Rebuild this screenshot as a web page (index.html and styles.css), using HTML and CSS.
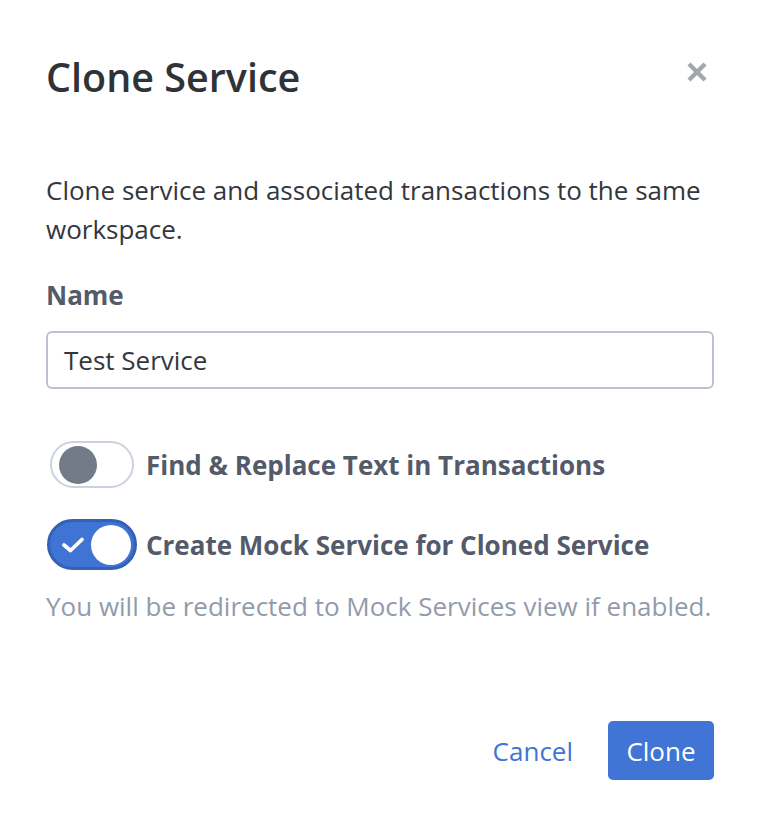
FILE: index.html
```html
<!DOCTYPE html>
<html>
<head>
<meta charset="utf-8">
<link rel="stylesheet" href="styles.css">
</head>
<body>
<div class="modal">
  <div class="header">
    <h1 class="title">Clone Service</h1>
    <button class="close" aria-label="Close">
      <svg width="24" height="24" viewBox="0 0 24 24"><path d="M4 4 L20 20 M20 4 L4 20" stroke="#a3a6ad" stroke-width="4.4" stroke-linecap="butt"/></svg>
    </button>
  </div>
  <p class="desc">Clone service and associated transactions to the same workspace.</p>
  <label class="field-label">Name</label>
  <div class="input">Test Service</div>
  <div class="toggle-row first">
    <span class="toggle off"><span class="knob"></span></span>
    <span class="toggle-label">Find &amp; Replace Text in Transactions</span>
  </div>
  <div class="toggle-row second">
    <span class="toggle on">
      <svg class="check" width="24" height="18" viewBox="0 0 24 18"><path d="M3 9 L9.5 14.5 L21 3.5" fill="none" stroke="#fff" stroke-width="3.8" stroke-linecap="round" stroke-linejoin="round"/></svg>
      <span class="knob"></span>
    </span>
    <span class="toggle-label">Create Mock Service for Cloned Service</span>
  </div>
  <p class="hint">You will be redirected to Mock Services view if enabled.</p>
  <div class="footer">
    <button class="btn-link">Cancel</button>
    <button class="btn-primary">Clone</button>
  </div>
</div>
</body>
</html>
```
FILE: styles.css
```css
* { box-sizing: border-box; }
html, body { margin: 0; padding: 0; background: #fff; }
body { font-family: "Open Sans", sans-serif; color: #33373d; }
.modal { padding: 44px 60px 0 46px; width: 774px; }
.header { display: flex; justify-content: space-between; align-items: flex-start; }
.title { margin: 0; font-size: 39.5px; font-weight: 600; color: #2f3338; line-height: 66px; }
.close { background: none; border: 0; padding: 0; margin: 16px 5px 0 0; width: 24px; height: 24px; cursor: pointer; }
.close svg { display: block; }
.desc { margin: 61px 0 0; font-size: 26px; line-height: 39px; color: #33373d; }
.field-label { display: block; margin-top: 26px; font-size: 26px; font-weight: 700; color: #535a69; line-height: 40px; }
.input { margin-top: 16px; height: 58px; border: 2px solid #bcc3cf; border-radius: 6px; padding: 0 16px; font-size: 26px; line-height: 54px; color: #33373d; }
.toggle-row { display: flex; align-items: center; }
.toggle-row.first { margin-top: 52px; padding-left: 4px; gap: 12px; }
.toggle-row.second { margin-top: 31px; padding-left: 1px; gap: 9px; }
.toggle-label { font-size: 26px; font-weight: 700; color: #535a69; }
.toggle { position: relative; display: inline-flex; align-items: center; border-radius: 999px; flex: none; }
.toggle.off { width: 84px; height: 47px; border: 2px solid #cbd2de; background: #fff; padding-left: 7px; }
.toggle.off .knob { width: 38px; height: 38px; border-radius: 50%; background: #737a88; }
.toggle.on { width: 90px; height: 51px; background: #3f73d4; border: 3px solid #3560b4; justify-content: space-between; padding: 0 3px 0 11px; }
.toggle.on .knob { width: 40px; height: 40px; border-radius: 50%; background: #fff; }
.check { display: block; }
.hint { margin: 17px 0 0; font-size: 26px; color: #929bab; line-height: 39px; }
.footer { display: flex; justify-content: flex-end; align-items: center; gap: 35px; margin-top: 95px; }
.btn-link { background: none; border: 0; padding: 0; font-family: inherit; font-size: 26px; color: #3f73d4; cursor: pointer; }
.btn-primary { background: #4075d6; color: #fff; border: 0; border-radius: 5px; font-family: inherit; font-size: 26px; width: 106px; height: 59px; cursor: pointer; }
```
